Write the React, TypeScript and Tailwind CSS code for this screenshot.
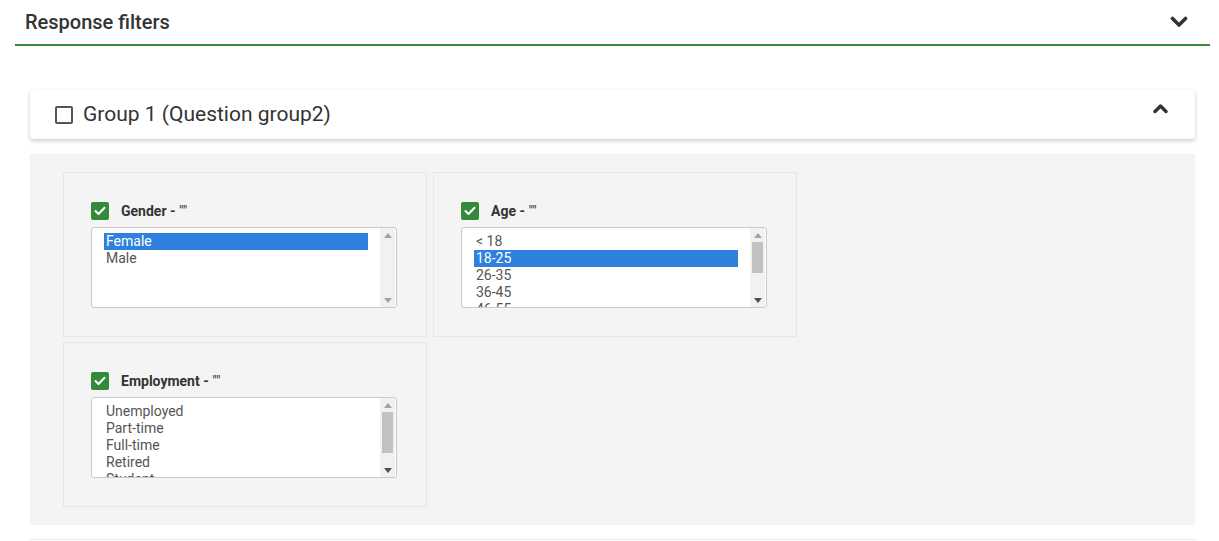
import React from "react";

const GREEN = "#35893b";

type FilterDef = {
  label: string;
  options: string[];
  selected: number;
  thumb?: { top: number; height: number };
};

const FILTERS: FilterDef[] = [
  { label: "Gender", options: ["Female", "Male"], selected: 0 },
  { label: "Age", options: ["< 18", "18-25", "26-35", "36-45", "46-55", "56-65", "> 65"], selected: 1, thumb: { top: 0, height: 31 } },
  { label: "Employment", options: ["Unemployed", "Part-time", "Full-time", "Retired", "Student", "Other"], selected: -1, thumb: { top: 0, height: 41 } },
];

function ChevronDown() {
  return (
    <svg width="18" height="12" viewBox="0 0 18 12">
      <polyline points="2.5,2.5 9,9 15.5,2.5" fill="none" stroke="#333" strokeWidth="3.6" strokeLinecap="round" strokeLinejoin="round" />
    </svg>
  );
}

function ChevronUp() {
  return (
    <svg width="15" height="11" viewBox="0 0 15 11">
      <polyline points="2,8.5 7.5,3 13,8.5" fill="none" stroke="#333" strokeWidth="3.4" strokeLinecap="round" strokeLinejoin="round" />
    </svg>
  );
}

function GreenCheck() {
  return (
    <div className="w-[18px] h-[18px] rounded-[2px] bg-[#35893b] flex items-center justify-center shrink-0">
      <svg width="12" height="10" viewBox="0 0 12 10">
        <polyline points="1.5,5 4.5,8 10.5,1.8" fill="none" stroke="#fff" strokeWidth="2" strokeLinecap="round" strokeLinejoin="round" />
      </svg>
    </div>
  );
}

function ScrollArrow({ up, active }: { up?: boolean; active?: boolean }) {
  return (
    <div className="h-[14px] flex items-center justify-center">
      <svg width="8" height="5" viewBox="0 0 8 5">
        <polygon points={up ? "0,5 8,5 4,0" : "0,0 8,0 4,5"} fill={active ? "#505050" : "#a3a3a3"} />
      </svg>
    </div>
  );
}

function ListBox({ f }: { f: FilterDef }) {
  return (
    <div className="mt-[7px] w-[306px] h-[81px] border border-[#c9c9c9] rounded-[3px] bg-white flex overflow-hidden">
      <div className="flex-1 overflow-hidden pt-[5px] pl-[12px] pr-[12px]">
        {f.options.map((o, i) => (
          <div
            key={o}
            className={`h-[17px] leading-[17px] text-[14px] pl-[2px] whitespace-nowrap ${i === f.selected ? "bg-[#2e82dd] text-white" : "text-[#555]"}`}
          >
            {o}
          </div>
        ))}
      </div>
      <div className="w-[15px] mr-[1px] bg-[#f1f1f1] flex flex-col">
        <ScrollArrow up />
        <div className="flex-1 px-[2px]">
          {f.thumb && <div className="bg-[#c1c1c1]" style={{ marginTop: f.thumb.top, height: f.thumb.height }} />}
        </div>
        <ScrollArrow active={!!f.thumb} />
      </div>
    </div>
  );
}

function FilterCard({ f }: { f: FilterDef }) {
  return (
    <div className="w-[364px] h-[165px] border border-[#e7e7e7] pt-[29px] pl-[27px]">
      <div className="flex items-center">
        <GreenCheck />
        <span className="ml-[12px] text-[14px] font-bold text-[#333] leading-none">
          {f.label} - <span className="font-normal text-[14px] text-[#335]">""</span>
        </span>
      </div>
      <ListBox f={f} />
    </div>
  );
}

export default function App() {
  return (
    <div className="w-[1219px] h-[541px] bg-white overflow-hidden" style={{ fontFamily: "Roboto, 'Liberation Sans', sans-serif" }}>
      <div className="ml-[15px] w-[1195px]">
        <div className="h-[46px] flex items-center justify-between pl-[10px] pr-[22px] border-b-2" style={{ borderColor: GREEN }}>
          <span className="text-[20px] font-medium text-[#333]">Response filters</span>
          <ChevronDown />
        </div>

        <div className="mx-[15px] mt-[44px]">
          <div className="h-[49px] bg-white rounded-[4px] shadow-[0_2px_4px_rgba(0,0,0,0.2),0_0_2px_rgba(0,0,0,0.06)] flex items-center pl-[25px] pr-[27px]">
            <div className="w-[18px] h-[18px] border-2 border-[#555] rounded-[2px]" />
            <span className="ml-[10px] text-[21px] text-[#333]">Group 1 (Question group2)</span>
            <div className="ml-auto -mt-[12px]">
              <ChevronUp />
            </div>
          </div>

          <div className="mt-[15px] h-[371px] bg-[#f4f4f4] pt-[18px] pl-[33px]">
            <div className="grid grid-cols-[364px_364px] gap-x-[6px] gap-y-[5px]">
              {FILTERS.map(f => (
                <FilterCard key={f.label} f={f} />
              ))}
            </div>
          </div>

          <div className="mt-[14px] border-t border-[#e6e6e6]" />
        </div>
      </div>
    </div>
  );
}
